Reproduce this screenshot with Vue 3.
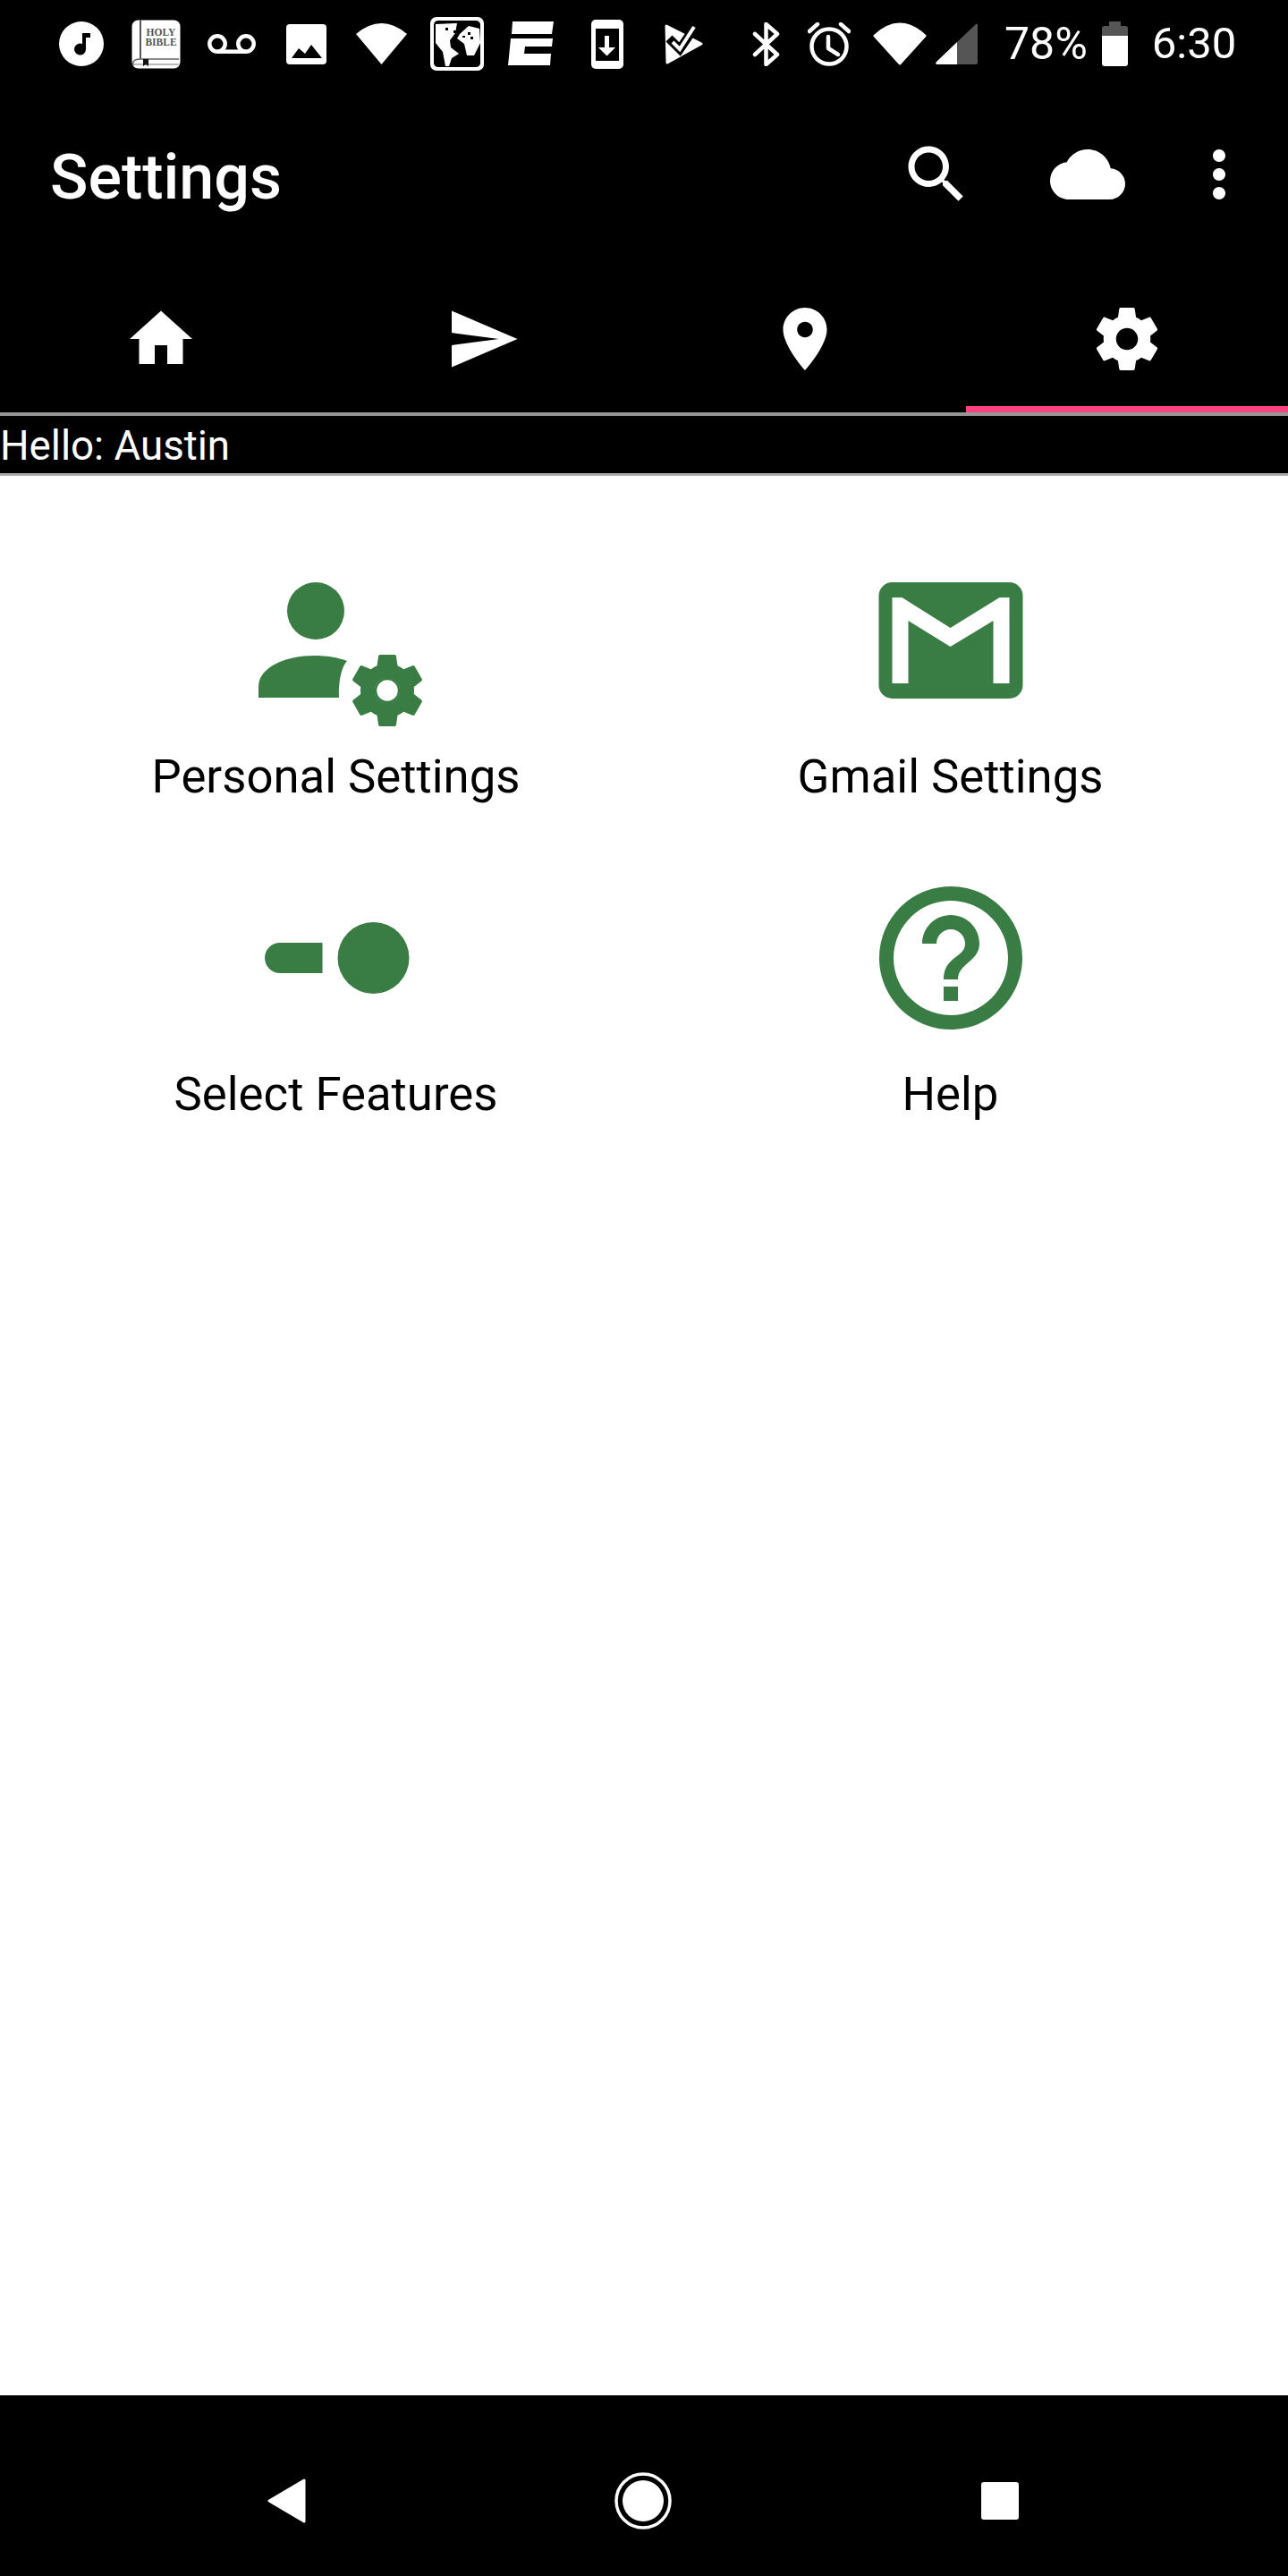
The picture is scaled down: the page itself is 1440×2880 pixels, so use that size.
<script setup>
const tabs = [
  { name: 'home', d: 'M10 20v-6h4v6h5v-8h3L12 3 2 12h3v8z' },
  { name: 'send', d: 'M2.01 21L23 12 2.01 3 2 10l15 2-15 2z' },
  { name: 'place', d: 'M12 2C8.13 2 5 5.13 5 9c0 5.25 7 13 7 13s7-7.75 7-13c0-3.87-3.13-7-7-7zm0 9.5c-1.38 0-2.5-1.12-2.5-2.5s1.12-2.5 2.5-2.5 2.5 1.12 2.5 2.5-1.12 2.5-2.5 2.5z' },
  { name: 'settings', active: true, d: gearPath() },
]

function gearPath() {
  return 'M19.43 12.98c.04-.32.07-.64.07-.98s-.03-.66-.07-.98l2.11-1.65c.19-.15.24-.42.12-.64l-2-3.46c-.12-.22-.39-.3-.61-.22l-2.49 1c-.52-.4-1.08-.73-1.69-.98l-.38-2.65C14.46 2.18 14.25 2 14 2h-4c-.25 0-.46.18-.49.42l-.38 2.65c-.61.25-1.17.59-1.69.98l-2.49-1c-.23-.09-.49 0-.61.22l-2 3.46c-.13.22-.07.49.12.64l2.11 1.65c-.04.32-.07.65-.07.98s.03.66.07.98l-2.11 1.65c-.19.15-.24.42-.12.64l2 3.46c.12.22.39.3.61.22l2.49-1c.52.4 1.08.73 1.69.98l.38 2.65c.03.24.24.42.49.42h4c.25 0 .46-.18.49-.42l.38-2.65c.61-.25 1.17-.59 1.69-.98l2.49 1c.23.09.49 0 .61-.22l2-3.46c.12-.22.07-.49-.12-.64l-2.11-1.65zM12 15.5c-1.93 0-3.5-1.57-3.5-3.5s1.57-3.5 3.5-3.5 3.5 1.57 3.5 3.5-1.57 3.5-3.5 3.5z'
}

const gear = gearPath()
</script>

<template>
  <div class="page">
    <div class="status">
      <svg class="s-music" viewBox="0 0 50 50"><path fill="#fff" fill-rule="evenodd" d="M25 0a25 25 0 1 0 0 50a25 25 0 1 0 0-50zM26 13h9v5h-5v13a6.5 6.5 0 1 1-4-6z" /></svg>
      <svg class="s-bible" viewBox="0 0 55 55">
        <rect x="0.5" y="0.5" width="54" height="54" rx="7" fill="#fff" />
        <rect x="9" y="0" width="2" height="44" fill="#555" />
        <path d="M2 52q-2-8 8-8h43" fill="none" stroke="#666" stroke-width="1.5" />
        <path d="M3 50h50" stroke="#777" stroke-width="1" />
        <path d="M13 44h6v8l-3-2l-3 2z" fill="#111" />
        <text class="bible-text" x="33" y="18">HOLY</text>
        <text class="bible-text" x="33" y="29">BIBLE</text>
      </svg>
      <svg class="s-vm" viewBox="0 0 54 22" fill="none" stroke="#fff" stroke-width="4.5">
        <circle cx="11" cy="11" r="8.7" />
        <circle cx="43" cy="11" r="8.7" />
        <path d="M11 19.7h32" />
      </svg>
      <svg class="s-image" viewBox="0 0 45 45">
        <rect width="45" height="45" rx="4" fill="#fff" />
        <path d="M6 38l8-11 7 6 7-10 12 15z" fill="#000" />
      </svg>
      <svg class="s-wifi" viewBox="0 0 57 46"><path d="M0 12Q28.5-12 57 12L28.5 46z" fill="#fff" /></svg>
      <svg class="s-map" viewBox="0 0 60 60">
        <rect width="60" height="60" rx="7" fill="#fff" />
        <path d="M4 8q1-4 5-4h42q4 0 5 4v44q-1 4-5 4H9q-4 0-5-4z" fill="#000" />
        <path d="M6 8l24-1-2 11-6 8 1 8 9 7-8 5-3 9h-4l-3-16-8-10z M33 19l10-9 12 3 1 16-7 14h-8l-3-13-8-6z" fill="#fff" />
        <path d="M17 12h3v3h-3z M26 15h3v3h-3z M42 17h3v3h-3z M45 22h3v3h-3z M36 21h3v2h-3z" fill="#000" />
      </svg>
      <svg class="s-espn" viewBox="0 0 52 50"><path d="M5 0h46l-2 14H4z M3 19h47l-1 9H19l-1 8h30l-1 13H0z" fill="#fff" /></svg>
      <svg class="s-phone" viewBox="0 0 36 55">
        <rect width="36" height="55" rx="5" fill="#fff" />
        <rect x="5" y="10" width="26" height="36" fill="#000" />
        <path d="M15 18h5v13h7l-9.500 9.500L8 31h7z" fill="#fff" />
      </svg>
      <svg class="s-check" viewBox="0 0 43 45">
        <path d="M2 2L41 22L3 43z" fill="#fff" stroke="#fff" stroke-width="3" stroke-linejoin="round" />
        <path d="M5 16l12 12L38 -3" fill="none" stroke="#000" stroke-width="10" />
        <path d="M9 20l8 8L33 3" fill="none" stroke="#fff" stroke-width="4" />
      </svg>
      <svg class="s-bt" viewBox="0 0 31 49" fill="none" stroke="#fff" stroke-width="4.500" stroke-linecap="round" stroke-linejoin="round">
        <path d="M3 13L28 36L15.500 47V2L28 13L3 36" />
      </svg>
      <svg class="s-alarm" viewBox="0 0 48 49" fill="none" stroke="#fff" stroke-width="4.500" stroke-linecap="round" stroke-linejoin="round">
        <circle cx="24" cy="27" r="19.500" />
        <path d="M23 16v13l11 7" />
        <path d="M2 10l9-8M37 2l9 8" />
      </svg>
      <svg class="s-wifi2" viewBox="0 0 60 48"><path d="M2 15Q30-11 58 15L30 46z" fill="#fff" stroke="#fff" stroke-width="3" stroke-linejoin="round" /></svg>
      <svg class="s-signal" viewBox="0 0 47 46">
        <path d="M24 21L45 1q2-1 2 1v42q0 2-2 2H24z" fill="#555" />
        <path d="M24 21V46H2q-3 0-1-3z" fill="#fff" />
      </svg>
      <span class="s-pct">78%</span>
      <svg class="s-batt" viewBox="0 0 29 50">
        <path d="M8 0h13v5h5q3 0 3 3v8H0V8q0-3 3-3h5z" fill="#555" />
        <path d="M0 16h29v31q0 3-3 3H3q-3 0-3-3z" fill="#fff" />
      </svg>
      <span class="s-time">6:30</span>
    </div>

    <div class="toolbar">
      <div class="title">Settings</div>
      <svg class="action" viewBox="0 0 24 24"><path fill="#fff" d="M15.500 14h-.79l-.28-.27C15.410 12.590 16 11.110 16 9.500 16 5.910 13.090 3 9.500 3S3 5.910 3 9.500 5.910 16 9.500 16c1.610 0 3.090-.59 4.230-1.570l.27.28v.79l5 4.990L20.490 19l-4.990-5zm-6 0C7.010 14 5 11.990 5 9.500S7.010 5 9.500 5 14 7.010 14 9.500 11.990 14 9.500 14z" /></svg>
      <svg class="action cloud" viewBox="0 0 24 24"><path fill="#fff" d="M19.350 10.040C18.670 6.590 15.640 4 12 4 9.110 4 6.600 5.640 5.350 8.040 2.340 8.360 0 10.910 0 14c0 3.310 2.690 6 6 6h13c2.760 0 5-2.240 5-5 0-2.640-2.050-4.780-4.650-4.960z" /></svg>
      <svg class="action dots" viewBox="0 0 24 24"><path fill="#fff" d="M12 8c1.100 0 2-.9 2-2s-.9-2-2-2-2 .9-2 2 .9 2 2 2zm0 2c-1.100 0-2 .9-2 2s.9 2 2 2 2-.9 2-2-.9-2-2-2zm0 6c-1.100 0-2 .9-2 2s.9 2 2 2 2-.9 2-2-.9-2-2-2z" /></svg>
    </div>

    <div class="tabs">
      <div v-for="tab in tabs" :key="tab.name" :class="{ tab: true, active: tab.active }">
        <svg class="tab-icon" viewBox="0 0 24 24"><path fill="#fff" :d="tab.d" /></svg>
      </div>
    </div>

    <div class="hello">Hello: Austin</div>

    <div class="content">
      <div class="grid">
        <div class="cell">
          <svg class="big" viewBox="0 0 192 192">
            <circle cx="73" cy="63" r="32" />
            <path d="M9 160v-12c0-22 30-35 62-35 14 0 27 2 37 6-6 6-10 24-9 41z" />
            <path :d="gear" transform="translate(105 104) scale(4)" />
            <circle cx="153" cy="152" r="13" fill="none" stroke="#3a7d44" stroke-width="2.500" />
          </svg>
          <div class="label">Personal Settings</div>
        </div>
        <div class="cell">
          <svg class="big" viewBox="0 0 192 192">
            <rect x="15.500" y="31" width="161" height="130" rx="15" />
            <path fill="#fff" d="M30.500 48h11l54 34 55-34h11v96h-18V74l-48 29-47-29v70h-18z" />
          </svg>
          <div class="label">Gmail Settings</div>
        </div>
        <div class="cell">
          <svg class="big" viewBox="0 0 192 192">
            <path d="M33 79h47.500v34H33a17 17 0 0 1 0-34z" />
            <circle cx="137.500" cy="96" r="40" />
          </svg>
          <div class="label">Select Features</div>
        </div>
        <div class="cell">
          <svg class="big" viewBox="0 0 24 24">
            <path d="M11 18h2v-2h-2v2zm1-16C6.480 2 2 6.480 2 12s4.480 10 10 10 10-4.480 10-10S17.520 2 12 2zm0 18c-4.410 0-8-3.590-8-8s3.590-8 8-8 8 3.590 8 8-3.590 8-8 8zm0-14c-2.210 0-4 1.790-4 4h2c0-1.100.9-2 2-2s2 .9 2 2c0 2-3 1.750-3 5h2c0-2.250 3-2.500 3-5 0-2.210-1.790-4-4-4z" />
          </svg>
          <div class="label">Help</div>
        </div>
      </div>
    </div>

    <div class="navbar">
      <svg class="nav-icon" viewBox="0 0 64 64"><path d="M52 9v46L13 32z" fill="#fff" stroke="#fff" stroke-width="3" stroke-linejoin="round" /></svg>
      <svg class="nav-icon" viewBox="0 0 64 64">
        <circle cx="32" cy="32" r="30" fill="none" stroke="#fff" stroke-width="3.500" />
        <circle cx="32" cy="32" r="23" fill="#fff" />
      </svg>
      <svg class="nav-icon" viewBox="0 0 64 64"><rect x="11" y="11" width="42" height="42" rx="3" fill="#fff" /></svg>
    </div>
  </div>
</template>

<style>
html, body {
  margin: 0;
  background: #000;
}
</style>

<style scoped>
.page {
  width: 1440px;
  height: 2880px;
  display: flex;
  flex-direction: column;
  background: #000;
  color: #fff;
  font-family: Roboto, "Liberation Sans", sans-serif;
}

.status {
  height: 98px;
  display: flex;
  align-items: center;
  flex-shrink: 0;
}

.status svg {
  display: block;
  flex-shrink: 0;
}

.s-music { width: 50px; height: 50px; margin-left: 66px; }
.s-bible { width: 55px; height: 55px; margin-left: 31px; }
.s-vm { width: 54px; height: 22px; margin-left: 30px; }
.s-image { width: 45px; height: 45px; margin-left: 34px; }
.s-wifi { width: 57px; height: 46px; margin-left: 33px; }
.s-map { width: 60px; height: 60px; margin-left: 26px; }
.s-espn { width: 52px; height: 50px; margin-left: 27px; }
.s-phone { width: 36px; height: 55px; margin-left: 41px; }
.s-check { width: 43px; height: 45px; margin-left: 46px; }
.s-bt { width: 31px; height: 49px; margin-left: 55px; }
.s-alarm { width: 48px; height: 49px; margin-left: 31px; }
.s-wifi2 { width: 60px; height: 48px; margin-left: 25px; }
.s-signal { width: 47px; height: 46px; margin-left: 10px; }
.s-batt { width: 29px; height: 50px; margin-left: 16px; }

.s-pct, .s-time {
  font-size: 50px;
  line-height: 56px;
}

.s-pct { margin-left: 30px; }
.s-time { margin-left: 27px; font-size: 49px; }

.bible-text {
  font-family: "Liberation Serif", serif;
  font-size: 11.500px;
  font-weight: 700;
  fill: #555;
  text-anchor: middle;
}

.toolbar {
  height: 198px;
  padding-left: 56px;
  padding-right: 35px;
  display: flex;
  align-items: center;
  flex-shrink: 0;
}

.title {
  flex: 1;
  font-size: 70px;
  font-weight: 500;
  line-height: 84px;
  padding-top: 2px;
}

.action {
  width: 84px;
  height: 84px;
  display: block;
  margin-bottom: 4px;
}

.cloud { margin-left: 85px; }
.dots { margin-left: 63px; }

.tabs {
  height: 165px;
  display: grid;
  grid-template-columns: repeat(4, 1fr);
  flex-shrink: 0;
}

.tab {
  box-sizing: border-box;
  padding-top: 8px;
  border-bottom: 7px solid transparent;
  display: flex;
  align-items: center;
  justify-content: center;
}

.tab.active {
  border-bottom-color: #ff4081;
}

.tab-icon {
  width: 84px;
  height: 84px;
  display: block;
}

.hello {
  height: 60px;
  padding-top: 4px;
  border-top: 4px solid #969696;
  border-bottom: 3px solid #aaa;
  font-size: 45.700px;
  line-height: 60px;
  flex-shrink: 0;
}

.content {
  flex: 1;
  background: #fff;
  padding: 88px 34px 0 32px;
}

.grid {
  display: grid;
  grid-template-columns: 687px 687px;
  grid-auto-rows: 355px;
}

.cell {
  display: flex;
  flex-direction: column;
  align-items: center;
}

.big {
  width: 192px;
  height: 192px;
  display: block;
  fill: #3a7d44;
  filter: blur(0.6px);
}

.label {
  margin-top: 26px;
  font-size: 52.700px;
  line-height: 60px;
  color: #000;
}

.navbar {
  height: 202px;
  box-sizing: border-box;
  padding: 86px 290px 0 288px;
  display: flex;
  justify-content: space-between;
  align-items: flex-start;
  flex-shrink: 0;
}

.nav-icon {
  width: 64px;
  height: 64px;
  display: block;
}
</style>
